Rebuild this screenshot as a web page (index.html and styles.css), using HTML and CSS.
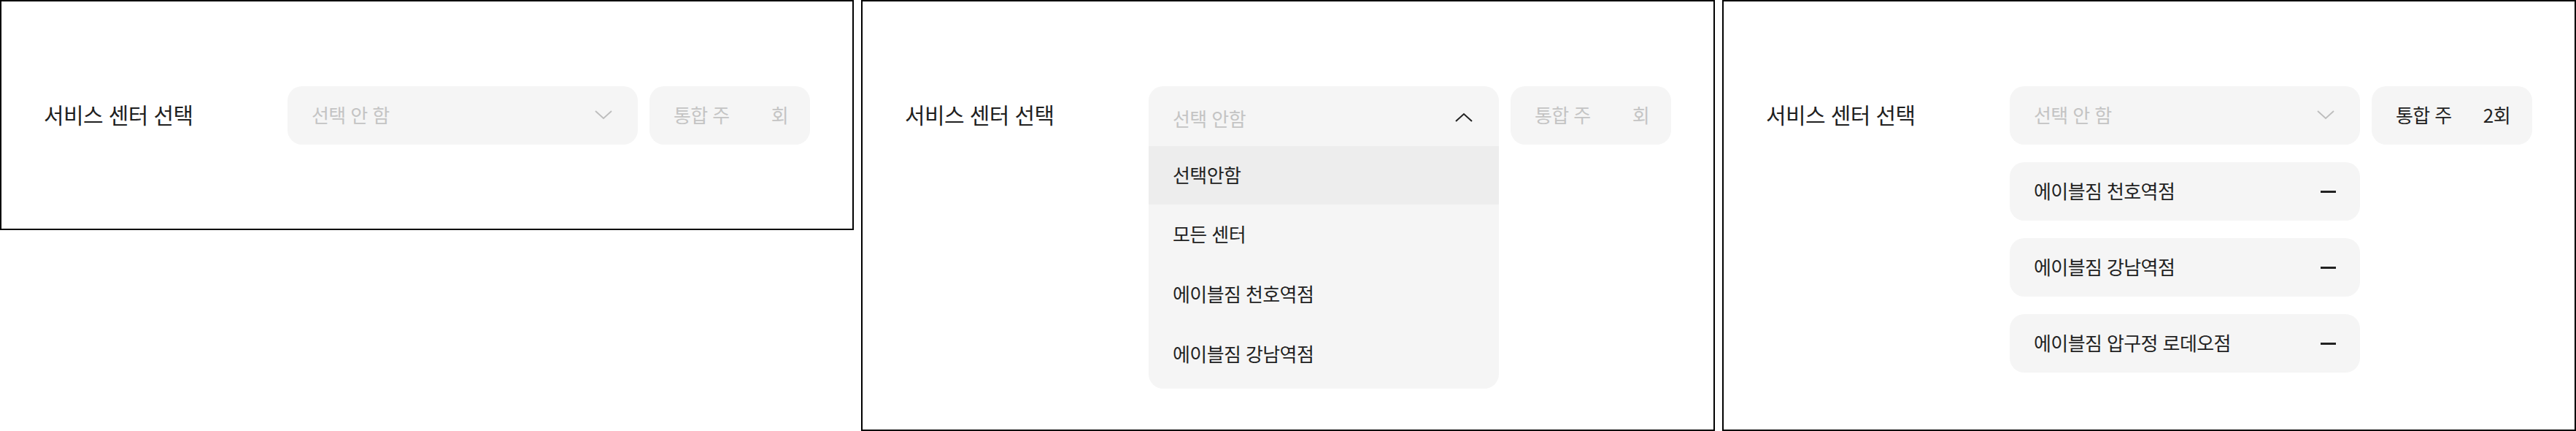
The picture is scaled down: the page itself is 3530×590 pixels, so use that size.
FILE: index.html
```html
<!DOCTYPE html>
<html lang="ko">
<head>
<meta charset="utf-8">
<title>서비스 센터 선택</title>
<link rel="stylesheet" href="styles.css">
</head>
<body>
<div class="board">
  <section class="panel panel-short">
    <div class="row">
      <div class="label">서비스 센터 선택</div>
      <div class="col">
        <div class="select">
          <span class="placeholder">선택 안 함</span>
          <svg class="chev" width="24" height="14" viewBox="0 0 24 14"><path d="M1 2 L12 12 L23 2" fill="none" stroke="#bdbdbd" stroke-width="1.8"/></svg>
        </div>
      </div>
      <div class="count"><span class="muted">통합 주</span><span class="muted">회</span></div>
    </div>
  </section>

  <section class="panel panel-tall">
    <div class="row">
      <div class="label">서비스 센터 선택</div>
      <div class="col">
        <div class="dropdown">
          <div class="dd-head">
            <span class="placeholder">선택 안함</span>
            <svg class="chev" width="24" height="14" viewBox="0 0 24 14"><path d="M1 12 L12 2 L23 12" fill="none" stroke="#222" stroke-width="2"/></svg>
          </div>
          <ul class="options">
            <li class="option active">선택안함</li>
            <li class="option">모든 센터</li>
            <li class="option">에이블짐 천호역점</li>
            <li class="option">에이블짐 강남역점</li>
          </ul>
        </div>
      </div>
      <div class="count"><span class="muted">통합 주</span><span class="muted">회</span></div>
    </div>
  </section>

  <section class="panel panel-tall">
    <div class="row">
      <div class="label">서비스 센터 선택</div>
      <div class="col">
        <div class="select">
          <span class="placeholder">선택 안 함</span>
          <svg class="chev" width="24" height="14" viewBox="0 0 24 14"><path d="M1 2 L12 12 L23 2" fill="none" stroke="#bdbdbd" stroke-width="1.8"/></svg>
        </div>
        <div class="chip"><span>에이블짐 천호역점</span><span class="minus"></span></div>
        <div class="chip"><span>에이블짐 강남역점</span><span class="minus"></span></div>
        <div class="chip"><span>에이블짐 압구정 로데오점</span><span class="minus"></span></div>
      </div>
      <div class="count"><span>통합 주</span><span>2회</span></div>
    </div>
  </section>
</div>
</body>
</html>
```

FILE: styles.css
```css
* { box-sizing: border-box; }

html, body {
  margin: 0;
  padding: 0;
  background: #fff;
}

body {
  font-family: "Noto Sans CJK KR", "Noto Sans", sans-serif;
  color: #222;
}

.board {
  display: flex;
  align-items: flex-start;
  gap: 10px;
}

.panel {
  width: 1170px;
  border: 2px solid #000;
  padding: 116px 58px 115px;
}

.panel-tall {
  height: 590px;
}

.row {
  display: flex;
  align-items: flex-start;
}

.label {
  width: 334px;
  height: 80px;
  display: flex;
  align-items: center;
  font-size: 30px;
  letter-spacing: -0.6px;
  color: #1f1f1f;
  padding-bottom: 4px;
}

.col {
  width: 480px;
  display: flex;
  flex-direction: column;
  gap: 24px;
}

.select,
.chip,
.count {
  height: 80px;
  background: #f5f5f5;
  border-radius: 20px;
  display: flex;
  align-items: center;
  justify-content: space-between;
  font-size: 26px;
  letter-spacing: -0.6px;
}

.select {
  padding: 0 35px 3px 33px;
}

.placeholder {
  color: #c4c4c4;
}

.chev {
  display: block;
}

.count {
  width: 220px;
  margin-left: 16px;
  padding: 0 30px 3px 33px;
  color: #222;
}

.muted {
  color: #c4c4c4;
}

.chip {
  padding: 0 33px 3px 33px;
  color: #222;
}

.minus {
  width: 21px;
  height: 3px;
  background: #222;
  margin-top: 3px;
}

.dropdown {
  background: #f5f5f5;
  border-radius: 20px;
  overflow: hidden;
  font-size: 26px;
  letter-spacing: -0.6px;
}

.dd-head {
  height: 82px;
  padding: 4px 36px 0 33px;
  display: flex;
  align-items: center;
  justify-content: space-between;
}

.options {
  list-style: none;
  margin: 0;
  padding: 0 0 6px;
  display: flex;
  flex-direction: column;
}

.option {
  height: 82px;
  padding: 0 33px 3px;
  display: flex;
  align-items: center;
  color: #222;
}

.option.active {
  height: 80px;
  background: #ededed;
}
```
